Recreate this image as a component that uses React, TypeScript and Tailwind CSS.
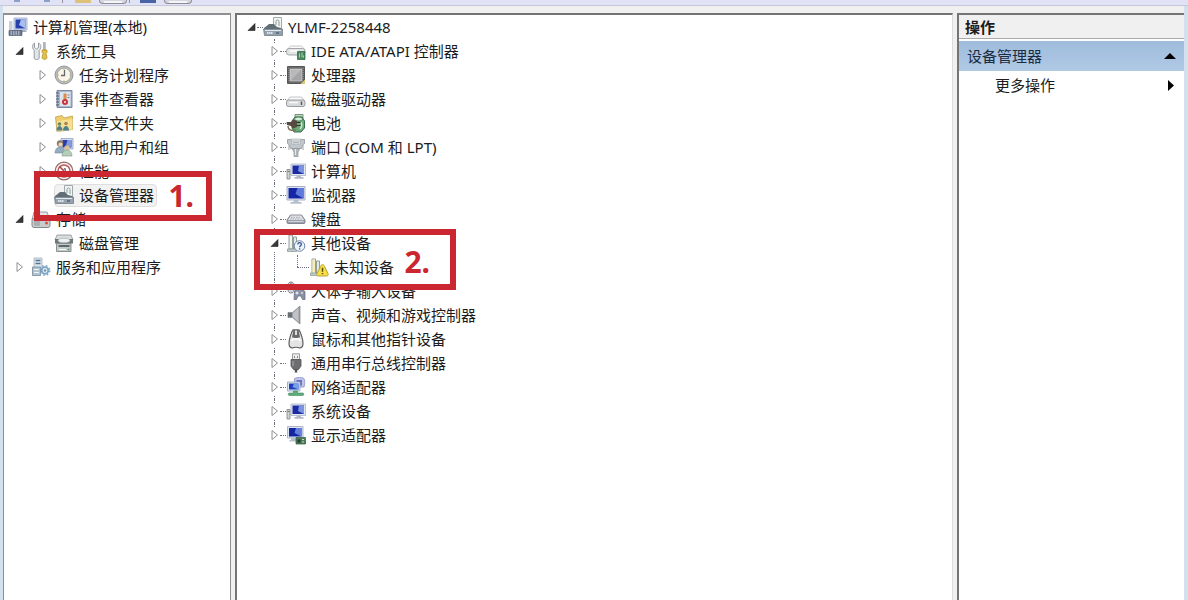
import { useState } from 'react'
import type { ReactNode } from 'react'
import clsx from 'clsx'

type IconName =
  | 'console' | 'tools' | 'clock' | 'events' | 'share' | 'users' | 'perf' | 'devmgr'
  | 'storage' | 'diskmgmt' | 'services' | 'ide' | 'cpu' | 'drive' | 'battery' | 'port'
  | 'computer' | 'monitor' | 'keyboard' | 'other' | 'unknown' | 'hid' | 'sound' | 'mouse'
  | 'usb' | 'network' | 'display'

interface TreeNode {
  label: string
  icon: IconName
  children?: TreeNode[]
  expandable?: boolean
  selected?: boolean
  mark?: 'first' | 'second'
}

const consoleTree: TreeNode[] = [
  {
    label: '系统工具',
    icon: 'tools',
    children: [
      { label: '任务计划程序', icon: 'clock', expandable: true },
      { label: '事件查看器', icon: 'events', expandable: true },
      { label: '共享文件夹', icon: 'share', expandable: true },
      { label: '本地用户和组', icon: 'users', expandable: true },
      { label: '性能', icon: 'perf', expandable: true },
      { label: '设备管理器', icon: 'devmgr', selected: true, mark: 'first' },
    ],
  },
  {
    label: '存储',
    icon: 'storage',
    children: [{ label: '磁盘管理', icon: 'diskmgmt' }],
  },
  { label: '服务和应用程序', icon: 'services', expandable: true },
]

const deviceTree: TreeNode = {
  label: 'YLMF-2258448',
  icon: 'devmgr',
  children: [
    { label: 'IDE ATA/ATAPI 控制器', icon: 'ide', expandable: true },
    { label: '处理器', icon: 'cpu', expandable: true },
    { label: '磁盘驱动器', icon: 'drive', expandable: true },
    { label: '电池', icon: 'battery', expandable: true },
    { label: '端口 (COM 和 LPT)', icon: 'port', expandable: true },
    { label: '计算机', icon: 'computer', expandable: true },
    { label: '监视器', icon: 'monitor', expandable: true },
    { label: '键盘', icon: 'keyboard', expandable: true },
    {
      label: '其他设备',
      icon: 'other',
      mark: 'second',
      children: [{ label: '未知设备', icon: 'unknown' }],
    },
    { label: '人体学输入设备', icon: 'hid', expandable: true },
    { label: '声音、视频和游戏控制器', icon: 'sound', expandable: true },
    { label: '鼠标和其他指针设备', icon: 'mouse', expandable: true },
    { label: '通用串行总线控制器', icon: 'usb', expandable: true },
    { label: '网络适配器', icon: 'network', expandable: true },
    { label: '系统设备', icon: 'computer', expandable: true },
    { label: '显示适配器', icon: 'display', expandable: true },
  ],
}

const device = (
  <>
    <path d="M3 2h3.500v14H3z" fill="#f1f3f2" stroke="#87958f" strokeWidth=".9" />
    <path d="M7.500 4h3v12h-3z" fill="#e2e9e8" stroke="#87958f" strokeWidth=".9" />
    <path d="M1.500 16h9v2.500h-9z" fill="#c0c9cd" stroke="#87958f" strokeWidth=".7" />
  </>
)

const icons: Record<IconName, ReactNode> = {
  console: (
    <>
      <path d="M6 1h13v12H6z" fill="#d3dcee" stroke="#9aabc8" strokeWidth=".8" />
      <path d="M7.500 2.500h10v9h-10z" fill="#253fae" />
      <path d="M13 2.500h4.500v9L11 8z" fill="#a9bdf0" />
      <path d="M1 4h3.500v9H1z" fill="#c8cfdb" />
      <path d="M4 13h13l2 2H5z" fill="#a3adbf" />
      <path d="M1 13.500h13v5H1z" fill="#69758e" stroke="#48536b" strokeWidth=".6" />
      <path d="M2.500 15h10M2.500 17h10" stroke="#dfe5ef" strokeDasharray="1.500 1" />
    </>
  ),
  tools: (
    <>
      <path d="M3.500 2v4.500l2 1.500 2-1.500V2c3 1.500 3 5.500.7 7.500V17c0 2-5 2-5 0V9.500C1 7.500 1 3.500 3.500 2z" fill="#e3e6e8" stroke="#8b9299" strokeWidth=".9" />
      <path d="M12.500 1.500h1.800V9h-1.800z" fill="#b8bec4" stroke="#7f868d" strokeWidth=".5" />
      <path d="M11 9h5v2.500l-1 1 1 4c0 2.500-5 2.500-5 0l1-4-1-1z" fill="#e3c04b" stroke="#b18e20" strokeWidth=".7" />
    </>
  ),
  clock: (
    <>
      <circle cx="10" cy="10" r="9" fill="#bcbdbd" stroke="#85888a" strokeWidth=".8" />
      <circle cx="10" cy="10" r="6.800" fill="#faf5e6" stroke="#8c8f91" strokeWidth=".6" />
      <path d="M10.500 5v5.500H7" fill="none" stroke="#626974" strokeWidth="1.300" />
      <path d="M10 3.800v1M10 15.500v1M3.800 10h1M15.500 10h1" stroke="#c09c5b" />
    </>
  ),
  events: (
    <>
      <path d="M3 1.500h15v17H3z" fill="#a8b8ce" stroke="#64748f" strokeWidth=".8" />
      <path d="M6 3h10.500v14H6z" fill="#dde4ec" />
      <path d="M2 4h3M2 7h3M2 10h3M2 13h3M2 16h3" stroke="#4f5a6c" />
      <path d="M9.500 4.500h3v6h-3z" fill="#dc8b4b" />
      <circle cx="11" cy="13" r="3" fill="#c9343c" />
      <path d="m10 12 2 2m0-2-2 2" stroke="#fff" strokeWidth=".7" />
      <path d="M13.500 6h2M13.500 8.500h2" stroke="#6d87ab" />
    </>
  ),
  share: (
    <>
      <path d="M1.500 4 8 2.500 10 5l8.500-2v13.500L3 18.500z" fill="#edcd6c" stroke="#c2a04a" strokeWidth=".8" />
      <path d="m3 8 15.500-2v10.500L3 18.500z" fill="#f7e093" />
      <circle cx="5.500" cy="11" r="1.800" fill="#658b5c" />
      <path d="M2.500 17.500c0-6 6-6 6 0z" fill="#547f91" />
      <circle cx="12" cy="10.500" r="1.800" fill="#a98352" />
      <path d="M9 17.500c0-6 6-6 6 0z" fill="#4d8190" />
    </>
  ),
  users: (
    <>
      <path d="M7 1.500h12V12H7z" fill="#d6def0" stroke="#93a1bd" strokeWidth=".8" />
      <path d="M8.500 3h9v7.500h-9z" fill="#2b3ca4" />
      <path d="M13.500 3h4v7.500L12 8z" fill="#8199df" />
      <circle cx="6" cy="6.500" r="3.200" fill="#8b7b68" />
      <circle cx="6.500" cy="7.500" r="2.100" fill="#ecd3b6" />
      <path d="M1 16c0-8 10-8 10 0z" fill="#94aec1" stroke="#708da1" strokeWidth=".6" />
      <circle cx="13" cy="11" r="2.700" fill="#d7c29c" />
      <path d="M8 19c0-8 10-8 10 0z" fill="#b4cfba" stroke="#789885" strokeWidth=".6" />
    </>
  ),
  perf: (
    <>
      <circle cx="10" cy="10" r="8.800" fill="#f8eeee" stroke="#946a6a" strokeWidth="1.200" />
      <circle cx="10" cy="10" r="6" fill="#fff" stroke="#b65a5a" strokeWidth="1.500" />
      <path d="m5.500 5.500 9 9" stroke="#b93b3e" strokeWidth="1.500" />
      <path d="m8 12 3-5 1 5" fill="none" stroke="#627083" />
    </>
  ),
  devmgr: (
    <>
      <path d="M10.500.5h8V12h-8z" fill="#f1f4f3" stroke="#96a1a5" strokeWidth=".9" />
      <path d="M13 8V4.500c0-2 3-2 3 0V9" fill="none" stroke="#889995" />
      <path d="M3 9.500 6 7h5l3 3 4 1v2H1v-2z" fill="#626e75" />
      <path d="M.5 12h19v6.500H1.500z" fill="#95a1ad" stroke="#68747e" strokeWidth=".7" />
      <path d="M2 13.500h16" stroke="#e4e9ee" />
      <path d="M4 16h6" stroke="#dce4ec" strokeWidth="1.800" strokeDasharray="1.500 .5" />
      <path d="M13 16h3" stroke="#4f6379" strokeWidth="1.500" />
    </>
  ),
  storage: (
    <>
      <path d="M3 3h13l3 8H1z" fill="#e3e4e4" stroke="#999c9f" />
      <rect x="1" y="9.500" width="18" height="9" rx="2" fill="#c9cccd" stroke="#85898c" />
      <path d="M3 12h6M3 14h6M3 16h6" stroke="#8d9194" />
      <circle cx="15.500" cy="14" r="1.500" fill="#d45144" />
    </>
  ),
  diskmgmt: (
    <>
      <path d="M3 2h14l2 5H1z" fill="#d9dddd" stroke="#8b9294" strokeWidth=".8" />
      <path d="M1 6h18v4.500H1z" fill="#6e7779" />
      <ellipse cx="10" cy="7.500" rx="6" ry="2.300" fill="#eef1ef" stroke="#9ba1a2" strokeWidth=".6" />
      <path d="M2.500 10.500H17v8H2.500z" fill="#c5caca" stroke="#747b7c" strokeWidth=".8" />
      <path d="M4.500 13h11" stroke="#525d5e" strokeWidth="1.800" />
      <path d="M5 16.500h7" stroke="#f7f7f7" />
      <circle cx="14.500" cy="16.500" r="1" fill="#5c9b64" />
    </>
  ),
  services: (
    <>
      <path d="M3 1h8v13H3z" fill="#dce6ef" stroke="#a0adb9" strokeWidth=".8" />
      <path d="M4.500 3.500h5M4.500 6.500h5" stroke="#56738e" strokeWidth="1.300" />
      <path d="M1.500 10h8v8.500h-8z" fill="#b0c3d2" stroke="#73899a" strokeWidth=".8" />
      <path d="M3 12.500h5M3 15.500h5" stroke="#f1f5f8" />
      <circle cx="14" cy="13.500" r="3.300" fill="#e5f1fa" stroke="#7da5c4" strokeWidth="1.800" />
      <circle cx="14" cy="13.500" r="4.800" fill="none" stroke="#7da5c4" strokeWidth="1.300" strokeDasharray="1.800 2" />
      <circle cx="14" cy="13.500" r="1.200" fill="#7090a9" />
    </>
  ),
  ide: (
    <>
      <path d="M4.500 5h11L19 9H1z" fill="#fafafa" stroke="#b1b4b6" strokeWidth=".7" />
      <rect x=".5" y="7.500" width="18.500" height="6.500" rx="2.500" fill="#e2e4e5" stroke="#8f9496" strokeWidth=".8" />
      <path d="M4 10h8" stroke="#fff" strokeWidth="1.500" />
      <path d="M11.500 10.500h7.500v8h-7.500z" fill="#47875a" stroke="#2b6040" strokeWidth=".7" />
      <path d="M13.500 16.500v-4M16 16.500v-5M17.500 16.500v-2" stroke="#c4e1c9" strokeWidth=".8" />
    </>
  ),
  cpu: (
    <>
      <rect x="1" y="1" width="18" height="18" rx="1" fill="#565658" />
      <rect x="4" y="4" width="12" height="12" fill="#b9b9ba" stroke="#d5d5d6" strokeWidth=".8" />
      <path d="m4.500 15.500 11-11v11z" fill="#a5a5a7" />
      <path d="M2.500 2.500h15M2.500 17.500h13M2.500 3v14M17.500 3v12" stroke="#858583" strokeDasharray="1 1" />
      <path d="m14.500 19 4.500-4.500V19z" fill="#ddc878" />
    </>
  ),
  drive: (
    <>
      <path d="M4 8h11.500l3 4H1z" fill="#fafafa" stroke="#b4b7b9" strokeWidth=".8" />
      <rect x=".5" y="11" width="18.500" height="6.500" rx="2" fill="#d7d9db" stroke="#85898d" strokeWidth=".8" />
      <path d="M3 13.500h9" stroke="#f9f9f9" strokeWidth="1.500" />
      <path d="M15.500 12.500v3.500" stroke="#565c5a" strokeWidth="1.500" />
    </>
  ),
  battery: (
    <>
      <path d="M9 1.500h8v4H9z" fill="#c4d7c4" stroke="#568060" strokeWidth=".8" />
      <path d="M9 4h7l2.500 4v7L15 19H8l-2-4V8z" fill="#6ca97a" stroke="#36704a" />
      <ellipse cx="12.500" cy="6" rx="4" ry="2" fill="#dcecdc" stroke="#36704a" strokeWidth=".8" />
      <path d="M15 9c1 2 1 5-1 7" fill="none" stroke="#cce4cc" strokeWidth="1.500" />
      <path d="M.5 9H5l2-2.500 4 1.500v6l-4 1.500L5 13l-4-1z" fill="#564a40" />
      <path d="M11 9.500h3.500M11 12.500h3.500" stroke="#2f2b26" strokeWidth="1.200" />
      <path d="M2 13c0 5 5 5 8 3.500" fill="none" stroke="#7c7050" strokeWidth="1.300" />
    </>
  ),
  port: (
    <>
      <path d="M1.500 2.500h17v4l-2 1.500-1 3.500H4.500L3.500 8l-2-1.500z" fill="#c2c7cb" stroke="#8f969b" strokeWidth=".8" />
      <path d="M5 2h10l-1 5H6z" fill="#e5e8ea" stroke="#9ca4a9" strokeWidth=".6" />
      <path d="M6.500 4h7M7.500 5.500h5" stroke="#7a8287" strokeDasharray="1 1" />
      <path d="M6 11.500h8l-2 3.500v4.500H8V15z" fill="#b2b9be" stroke="#8b9297" strokeWidth=".7" />
      <path d="M9.500 12v6" stroke="#e8ebed" />
      <path d="M3 8v5M17 8v5" stroke="#a0a7ac" />
    </>
  ),
  computer: (
    <>
      <path d="M5 3h14.500v11.500H5z" fill="#e3e7f2" stroke="#a9b1c8" strokeWidth=".8" />
      <path d="M6.500 4.500H18V13H6.500z" fill="#1b2ba3" />
      <path d="M13 4.500h5V13l-6-3z" fill="#7c92e0" />
      <path d="M10.500 14.500h4.500V16h2.500v1.800H8.500V16h2z" fill="#b2bac9" />
      <path d="M1 8.500h3V18H1z" fill="#d0d4d2" stroke="#7b8582" strokeWidth=".8" />
      <path d="M1.500 10.500h2" stroke="#69746f" />
    </>
  ),
  monitor: (
    <>
      <path d="M1 1.500h18V15H1z" fill="#e0e4f0" stroke="#a0a9be" strokeWidth=".9" />
      <path d="M2.500 3h15v10.500h-15z" fill="#1425a5" />
      <path d="M11.500 3h6v10.500L9.500 9z" fill="#5f7adb" />
      <path d="M7.500 15h5v2h3v1.800h-11V17h3z" fill="#b5bfcc" />
    </>
  ),
  keyboard: (
    <>
      <path d="M4.500 6h11l3.500 5v2.500c0 1-1 1-1 1H2s-1 0-1-1V11z" fill="#a0a3ad" stroke="#6f737d" strokeWidth=".8" />
      <path d="M5 6.500h10l3 4.500H2z" fill="#e4e5ea" />
      <path d="M5 8.300h10M4 10h12" stroke="#a4a7b1" strokeDasharray="1.500 1" />
      <path d="M2.500 12.500h15" stroke="#cdd0d7" />
    </>
  ),
  other: (
    <>
      {device}
      <circle cx="13.500" cy="13" r="5.300" fill="#eff4fb" stroke="#7486a5" />
      <path d="M11.800 11.500c0-2.500 3.600-2.300 3.600-.2 0 1.500-1.800 1.400-1.800 2.900M13.600 15.300v1.200" fill="none" stroke="#314e96" strokeWidth="1.300" />
    </>
  ),
  unknown: (
    <>
      {device}
      <path d="M3.500 2.500H6v13H3.500z" fill="#f6edae" />
      <path d="M13.500 7.500c1 0 1.500 1 2 2l3.500 7c.5 1.500 0 2.500-1.500 2.500h-8c-1.500 0-2-1-1.500-2.500l3.500-7c.5-1 1-2 2-2z" fill="#f5df45" stroke="#b9a032" />
      <path d="M13.500 10.800v4M13.500 16v1.300" stroke="#5a4c1d" strokeWidth="1.500" />
    </>
  ),
  hid: (
    <>
      <path d="M2 4c0-4 6-4 6 0v5c0 4-6 4-6 0z" fill="#d2d4d5" stroke="#777c81" strokeWidth=".9" />
      <path d="M5 1.500V6M2 6h6" stroke="#777c81" />
      <path d="M8.500 10 11 8.500h5l3 2v8h-2.500L15 15h-3l-1.500 3.500H8z" fill="#8a92a8" stroke="#5d6478" strokeWidth=".7" />
      <path d="M9.500 12h3M11 10.500v3" stroke="#fff" />
      <circle cx="16" cy="12" r="1" fill="#e8d8d8" />
    </>
  ),
  sound: (
    <>
      <path d="M2 7.500h4.500L14 1v18l-7.500-6.500H2z" fill="#9da1a5" stroke="#787d81" strokeWidth=".7" />
      <path d="M7 8 12.500 3v14L7 12z" fill="#bfc3c7" />
      <path d="M2 8h4v4H2z" fill="#696f74" />
    </>
  ),
  mouse: (
    <>
      <path d="M7 .8h6c2 3 4 10 4 13.500 0 3-1.500 4.700-3.500 4.700-1-1-6-1-7 0C4.500 19 3 17.300 3 14.300 3 10.800 5 3.800 7 .8z" fill="#e4e4e4" stroke="#606060" strokeWidth="1.200" />
      <path d="M7.500 1h5l1.500 7c-2 1.500-6 1.500-8 0z" fill="#6a6b6d" />
      <path d="M10 1.500v4.500" stroke="#eee" strokeWidth="1.800" />
      <path d="M5.500 12c1-3 8-3 9 0" fill="none" stroke="#fff" strokeWidth="1.500" />
    </>
  ),
  usb: (
    <>
      <path d="M6.500.8h7v6h-7z" fill="#ededed" stroke="#929292" strokeWidth=".9" />
      <path d="M8.500 3v2M11.500 3v2" stroke="#888" />
      <path d="M5 6.500h10V13l-2.500 3.500h-5L5 13z" fill="#6e6e71" stroke="#525254" strokeWidth=".8" />
      <path d="M7 8v5" stroke="#9a9a9d" strokeWidth="1.500" />
      <path d="M10 16v3.500" stroke="#515154" strokeWidth="2.500" />
    </>
  ),
  network: (
    <>
      <path d="M8.500 1.500c3-1.500 7-1.500 9.500 0 1 2 1 6 0 8.500h-9.500z" fill="#bfc4ea" stroke="#8a91bf" strokeWidth=".8" />
      <path d="M10.500 3H16v5.500h-5.500z" fill="#6a70c8" />
      <path d="M1.500 5H14v9H1.500z" fill="#dfe9f4" stroke="#8ca0bb" strokeWidth=".8" />
      <path d="M3 6.500h9.500v6H3z" fill="#203ebc" />
      <path d="M8 6.500h4.500v6L6.500 10z" fill="#75a1e8" />
      <path d="M7.500 14h4v2H17c1 0 1 2.500 0 2.500H3c-1 0-1-2.500 0-2.500h4.500z" fill="#5eac79" stroke="#418b61" strokeWidth=".6" />
    </>
  ),
  display: (
    <>
      <path d="M1.500 1.500h15.500V13H1.500z" fill="#dde2ef" stroke="#a0aabf" strokeWidth=".8" />
      <path d="M3 3h12.500v8.500H3z" fill="#1425a0" />
      <path d="M10 3h5.500v8.500L8.500 8z" fill="#6580dc" />
      <path d="M5 13h6v3.500H3.500V15H5z" fill="#b6c0cd" />
      <path d="M10 12.500h9.500v6.500H10z" fill="#4a7a58" stroke="#2f5c3e" strokeWidth=".7" />
      <path d="M11.500 14.500h3v3h-3z" fill="#203e2b" />
      <path d="M16 14.500h2M16 17h2" stroke="#c6dbc6" />
    </>
  ),
}

function NodeIcon({ name }: { name: IconName }) {
  return (
    <svg viewBox="0 0 20 20" className="size-5 shrink-0" aria-hidden="true">
      {icons[name]}
    </svg>
  )
}

function Arrow({ open }: { open: boolean }) {
  return (
    <svg viewBox="0 0 10 12" className="h-3 w-2.5" aria-hidden="true">
      {open ? (
        <path d="M8 2.500V9.500H1z" fill="#383838" stroke="#202020" strokeWidth=".6" />
      ) : (
        <path d="M2 1.500v9L7.500 6z" fill="#fff" stroke="#909090" />
      )}
    </svg>
  )
}

// Red callouts drawn over the tree
function Mark({ kind }: { kind: 'first' | 'second' }) {
  return (
    <span
      className={clsx(
        'pointer-events-none absolute z-10 flex items-center justify-end border-6 border-[#cb2730] text-[30px] leading-8 font-bold text-[#cb2730]',
        kind === 'first' ? '-top-3 -left-1 h-[50px] w-[178px] pr-3' : '-top-0.5 -left-4 h-[61px] w-[202px] pt-1 pr-5',
      )}
    >
      {kind === 'first' ? '1.' : '2.'}
    </span>
  )
}

interface TreeItemProps {
  node: TreeNode
  lines?: boolean
  depth?: number
  last?: boolean
}

function TreeItem({ node, lines = false, depth = 1, last = false }: TreeItemProps) {
  const [open, setOpen] = useState(Boolean(node.children))
  const hasToggle = node.expandable || node.children

  return (
    <li className="relative">
      {lines && depth > 0 && (
        <span
          className={clsx(
            'absolute top-0 left-1 border-l border-dotted border-gray-500',
            last ? 'h-3' : 'h-full',
          )}
        />
      )}
      <div className="relative flex h-6 items-center">
        <div className="relative flex h-6 w-4 shrink-0 items-center">
          {lines && (
            <span
              className={clsx(
                'absolute top-3 right-0 border-t border-dotted border-gray-500',
                hasToggle ? 'w-1.5' : 'w-3',
              )}
            />
          )}
          {hasToggle && (
            <button
              type="button"
              aria-label={node.label}
              aria-expanded={open}
              onClick={() => setOpen(!open)}
              className={clsx('relative flex', lines && 'bg-white py-0.5')}
            >
              <Arrow open={open} />
            </button>
          )}
        </div>
        {node.selected && (
          <span className="absolute left-4 h-[23px] w-[103px] rounded-sm border border-[#dedede] bg-[#f2f2f2]" />
        )}
        <span className="relative flex">
          <NodeIcon name={node.icon} />
        </span>
        <span className="relative ml-[5px] whitespace-nowrap">{node.label}</span>
        {node.mark && <Mark kind={node.mark} />}
      </div>
      {open && node.children && (
        <ul className="pl-[23px]">
          {node.children.map((child, index) => (
            <TreeItem
              key={child.label}
              node={child}
              lines={lines}
              depth={depth + 1}
              last={index === node.children!.length - 1}
            />
          ))}
        </ul>
      )}
    </li>
  )
}

function Toolbar() {
  const frame = 'h-1 w-7 rounded-b-sm border border-t-0 border-[#8c8c98] bg-[#d5d7df] px-1'
  return (
    <div className="flex h-[6px] items-start border-b border-[#c3c8da] bg-[#e1e2f6] pl-3.5">
      <button type="button" aria-label="后退" className="h-0.5 w-1.5 bg-[#8da1c5]" />
      <button type="button" aria-label="前进" className="ml-6 h-0.5 w-1.5 bg-[#8da1c5]" />
      <span className="ml-3 h-[3px] w-px bg-[#8f91a0]" />
      <button type="button" aria-label="上一级" className="ml-3 h-[3px] w-4 bg-[#dfc27a]" />
      <button type="button" aria-label="显示树" className={clsx(frame, 'ml-2')}>
        <span className="block h-0.5 bg-[#f4f5f6]" />
      </button>
      <span className="ml-0.5 h-[3px] w-px bg-[#8f91a0]" />
      <button type="button" aria-label="帮助" className="ml-2.5 h-[3px] w-4 bg-[#4865a4]" />
      <button type="button" aria-label="显示操作" className={clsx(frame, 'ml-2')}>
        <span className="block h-0.5 bg-[#f4f5f6]" />
      </button>
    </div>
  )
}

function ActionsPane() {
  return (
    <aside className="w-[227px] shrink-0 border-t-2 border-l-2 border-[#747474] bg-white">
      <h2 className="h-6 border-b border-[#a9a9a9] bg-[#f0f0f0] pl-1.5 leading-6 font-bold">操作</h2>
      <button
        type="button"
        className="mt-0.5 flex h-[30px] w-full items-center justify-between bg-linear-to-b from-[#9ebcdc] to-[#b0c9e5] px-2 text-[#1c2b40]"
      >
        设备管理器
        <svg viewBox="0 0 12 6" className="h-1.5 w-3" aria-hidden="true">
          <path d="M6 0 12 6H0z" fill="#000" />
        </svg>
      </button>
      <button type="button" className="flex h-7 w-full items-center justify-between pr-2.5 pl-9">
        更多操作
        <svg viewBox="0 0 6 11" className="h-[11px] w-1.5" aria-hidden="true">
          <path d="M0 0v11l6-5.500z" fill="#000" />
        </svg>
      </button>
    </aside>
  )
}

export default function App() {
  return (
    <div className="flex min-h-screen flex-col bg-[#f0f0f1] font-['Noto_Sans','Noto_Sans_CJK_SC',sans-serif] text-[15px] leading-6 text-[#1c1c1c]">
      <Toolbar />
      <div className="flex grow border-r-4 border-l-3 border-[#d3e0ed]">
        <div className="flex min-w-0 grow gap-1 pt-[7px]">
          <nav aria-label="控制台树" className="w-[228px] shrink-0 border border-t-2 border-b-0 border-[#8e9094] bg-white">
            <div className="flex h-6 items-center gap-[5px] pl-1">
              <NodeIcon name="console" />
              <span className="whitespace-nowrap">计算机管理(本地)</span>
            </div>
            <ul className="pl-[11px]">
              {consoleTree.map((node) => (
                <TreeItem key={node.label} node={node} />
              ))}
            </ul>
          </nav>
          <main className="min-w-0 grow border-t-2 border-r border-l-2 border-t-[#747474] border-r-[#dcdcdc] border-l-[#747474] bg-white">
            <ul className="pl-2.5">
              <TreeItem node={deviceTree} lines depth={0} />
            </ul>
          </main>
          <ActionsPane />
        </div>
      </div>
    </div>
  )
}
